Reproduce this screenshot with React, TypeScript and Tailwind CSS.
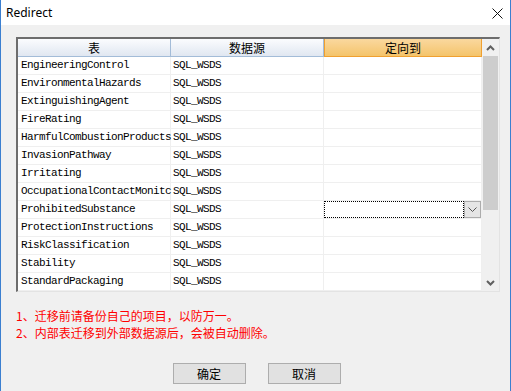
import React from "react";

const rows = [
  "EngineeringControl",
  "EnvironmentalHazards",
  "ExtinguishingAgent",
  "FireRating",
  "HarmfulCombustionProducts",
  "InvasionPathway",
  "Irritating",
  "OccupationalContactMonitc",
  "ProhibitedSubstance",
  "ProtectionInstructions",
  "RiskClassification",
  "Stability",
  "StandardPackaging",
];

const mono = { fontFamily: '"Liberation Mono", "DejaVu Sans Mono", monospace' };
const cjk = { fontFamily: '"Noto Sans CJK SC", "Noto Sans", sans-serif' };

export default function App() {
  return (
    <div className="w-[511px] h-[391px] bg-[#f0f0f0] border-l border-r border-[#3b7fd0] flex flex-col overflow-hidden">
      {/* Title bar */}
      <div className="h-[25px] bg-white flex items-center justify-between pl-[5px] pr-[7px] shrink-0">
        <span className="text-[12px] text-black leading-none" style={{ fontFamily: '"Noto Sans", sans-serif' }}>
          Redirect
        </span>
        <svg width="11" height="11" viewBox="0 0 11 11" className="mt-[1px]">
          <path d="M0.5 0.5 L10.5 10.5 M10.5 0.5 L0.5 10.5" stroke="#111" strokeWidth="1" />
        </svg>
      </div>

      {/* Grid */}
      <div className="mt-[12px] ml-[15px] w-[484px] h-[255px] border-t-2 border-l-2 border-[#6d6d6d] border-r border-b border-r-[#e3e3e3] border-b-[#e3e3e3] bg-white flex shrink-0">
        <div className="w-[464px] flex flex-col">
          {/* Header */}
          <div className="flex h-[18px] shrink-0 text-[12px] text-black" style={cjk}>
            <div className="w-[153px] border-r border-b border-[#a3bcd8] bg-gradient-to-b from-[#fbfcfe] to-[#e0e7f1] flex items-center justify-center leading-none">
              表
            </div>
            <div className="w-[153px] border-r border-b border-[#a3bcd8] bg-gradient-to-b from-[#fbfcfe] to-[#e0e7f1] flex items-center justify-center leading-none">
              数据源
            </div>
            <div className="w-[158px] border border-t-0 border-[#f0a030] bg-gradient-to-b from-[#fad89e] to-[#f4c46a] flex items-center justify-center leading-none">
              定向到
            </div>
          </div>
          {/* Rows */}
          {rows.map((r, i) => (
            <div key={r} className="flex h-[18px] shrink-0 text-[11px] text-black tracking-[-0.6px]" style={mono}>
              <div className="w-[153px] border-r border-b border-[#efefef] pl-[3px] flex items-center whitespace-nowrap">
                {r}
              </div>
              <div className="w-[153px] border-r border-b border-[#efefef] pl-[2px] flex items-center whitespace-nowrap">
                SQL_WSDS
              </div>
              <div className="w-[158px] border-r border-b border-[#efefef] flex items-stretch">
                {i === 8 && (
                  <div className="flex flex-1 h-[17px]">
                    <div className="flex-1 border border-dotted border-black" />
                    <div className="w-[17px] bg-[#e5e5e5] border border-[#acacac] flex items-center justify-center">
                      <svg width="9" height="5" viewBox="0 0 9 5">
                        <path d="M0.5 0.5 L4.5 4.5 L8.5 0.5" stroke="#555" strokeWidth="1" fill="none" />
                      </svg>
                    </div>
                  </div>
                )}
              </div>
            </div>
          ))}
        </div>
        {/* Scrollbar */}
        <div className="w-[17px] bg-[#f0f0f0] flex flex-col">
          <div className="h-[17px] flex items-center justify-center shrink-0">
            <svg width="9" height="6" viewBox="0 0 9 6">
              <path d="M1 5 L4.5 1.5 L8 5" stroke="#606060" strokeWidth="2" fill="none" />
            </svg>
          </div>
          <div className="flex-1 flex flex-col px-[1px]">
            <div className="h-[154px] bg-[#cdcdcd]" />
          </div>
          <div className="h-[17px] flex items-center justify-center shrink-0">
            <svg width="9" height="6" viewBox="0 0 9 6">
              <path d="M1 1 L4.5 4.5 L8 1" stroke="#606060" strokeWidth="2" fill="none" />
            </svg>
          </div>
        </div>
      </div>

      {/* Notes */}
      <div className="mt-[15px] ml-[15px] flex flex-col text-[12px] text-[#ff0000] leading-[17px]" style={cjk}>
        <span>1、迁移前请备份自己的项目，以防万一。</span>
        <span>2、内部表迁移到外部数据源后，会被自动删除。</span>
      </div>

      {/* Buttons */}
      <div className="mt-[22px] flex justify-center gap-[22px] pl-[2px]" style={cjk}>
        <button className="w-[73px] h-[21px] bg-[#e1e1e1] border border-[#adadad] text-[12px] text-black leading-none flex items-center justify-center">
          确定
        </button>
        <button className="w-[73px] h-[21px] bg-[#e1e1e1] border border-[#adadad] text-[12px] text-black leading-none flex items-center justify-center">
          取消
        </button>
      </div>
    </div>
  );
}
